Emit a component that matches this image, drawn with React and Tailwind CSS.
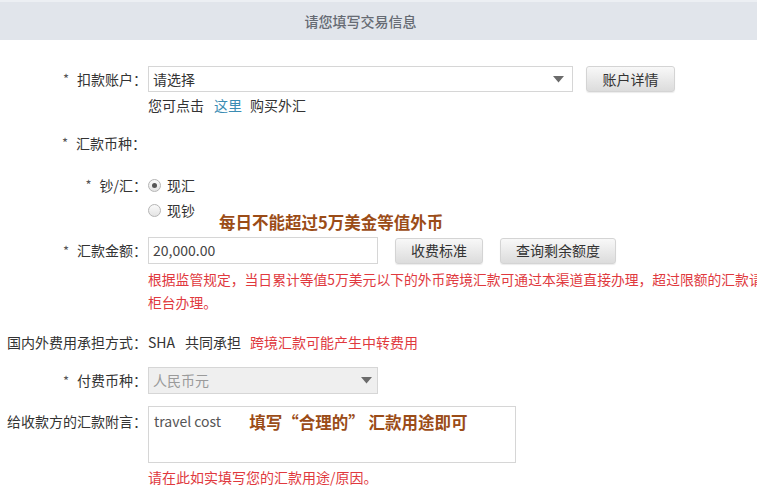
import React from 'react';

const font = { fontFamily: '"Noto Sans CJK SC", "Noto Sans", sans-serif' };

// Label column: right-aligned, ends where the fields start
function Label({ star, children }) {
  return (
    <div className="w-[148px] shrink-0 flex justify-end items-center pr-[1px] text-[14px] text-[#333] whitespace-nowrap">
      {star && <span className="mr-[8px] text-[13px] text-[#555]">*</span>}
      <span>{children}</span>
    </div>
  );
}

function Caret() {
  return (
    <svg width="11" height="7" viewBox="0 0 11 7" className="shrink-0">
      <path d="M0 0 L11 0 L5.5 6.5 Z" fill="#6b6b6b" />
    </svg>
  );
}

function Radio({ checked }) {
  return (
    <span className="w-[13px] h-[13px] rounded-full border border-[#b5b5b5] bg-gradient-to-b from-[#fafafa] to-[#e4e4e4] flex items-center justify-center shrink-0">
      {checked && <span className="w-[5px] h-[5px] rounded-full bg-[#555]" />}
    </span>
  );
}

function GrayButton({ className, children }) {
  return (
    <button
      type="button"
      className={`h-[26px] rounded-[3px] border border-[#d4d4d4] bg-gradient-to-b from-[#f8f8f8] to-[#dcdcdc] text-[14px] text-[#333] shadow-[0_1px_1px_rgba(0,0,0,0.08)] ${className}`}
    >
      {children}
    </button>
  );
}

export default function App() {
  return (
    <div className="w-[757px] h-[500px] overflow-hidden bg-white text-[#333]" style={font}>
      {/* header */}
      <div className="h-[40px] bg-[#e1e5eb] border-t-2 border-[#eceff3] flex items-center justify-center pr-[36px]">
        <span className="text-[14px] font-medium text-[#666b73]">请您填写交易信息</span>
      </div>

      {/* 扣款账户 */}
      <div className="flex items-center mt-[26px] h-[26px]">
        <Label star>扣款账户：</Label>
        <div className="w-[425px] h-[26px] border border-[#d6d6d6] flex items-center justify-between pl-[4px] pr-[8px] text-[14px]">
          <span>请选择</span>
          <Caret />
        </div>
        <GrayButton className="ml-[13px] w-[89px]">账户详情</GrayButton>
      </div>

      <div className="flex mt-[3px] h-[20px] items-center">
        <div className="w-[148px] shrink-0" />
        <span className="text-[14px]">您可点击</span>
        <span className="text-[14px] text-[#3b8cb3] ml-[10px]">这里</span>
        <span className="text-[14px] ml-[8px]">购买外汇</span>
      </div>

      {/* 汇款币种 */}
      <div className="flex mt-[18px] h-[20px] items-center">
        <div className="w-[148px] shrink-0 flex items-center text-[14px] whitespace-nowrap pl-[62px]">
          <span className="mr-[8px] text-[13px] text-[#555]">*</span>
          <span>汇款币种：</span>
        </div>
      </div>

      {/* 钞/汇 */}
      <div className="flex mt-[22px] h-[20px] items-center">
        <Label star>钞/汇：</Label>
        <Radio checked />
        <span className="ml-[6px] text-[14px]">现汇</span>
      </div>
      <div className="flex mt-[5px] h-[20px] items-center">
        <div className="w-[148px] shrink-0" />
        <Radio />
        <span className="ml-[6px] text-[14px]">现钞</span>
        <span className="relative top-[12px] ml-[24px] text-[16.5px] font-bold text-[#9b4c17] whitespace-nowrap">
          每日不能超过5万美金等值外币
        </span>
      </div>

      {/* 汇款金额 */}
      <div className="flex mt-[17px] h-[27px] items-center">
        <Label star>汇款金额：</Label>
        <div className="w-[230px] h-[27px] border border-[#d6d6d6] flex items-center pl-[4px] text-[14px] text-[#444]">
          20,000.00
        </div>
        <GrayButton className="ml-[17px] w-[88px]">收费标准</GrayButton>
        <GrayButton className="ml-[17px] w-[116px]">查询剩余额度</GrayButton>
      </div>

      <div className="flex mt-[4px]">
        <div className="w-[148px] shrink-0" />
        <div className="text-[13.8px] leading-[23px] text-[#e0393e] whitespace-nowrap">
          <div>根据监管规定，当日累计等值5万美元以下的外币跨境汇款可通过本渠道直接办理，超过限额的汇款请</div>
          <div>柜台办理。</div>
        </div>
      </div>

      {/* 费用承担 */}
      <div className="flex mt-[18px] h-[20px] items-center text-[14px]">
        <div className="w-[148px] shrink-0 pl-[7px] whitespace-nowrap">国内外费用承担方式：</div>
        <span>SHA</span>
        <span className="ml-[10px]">共同承担</span>
        <span className="ml-[9px] text-[#e0393e]">跨境汇款可能产生中转费用</span>
      </div>

      {/* 付费币种 */}
      <div className="flex mt-[15px] h-[27px] items-center">
        <Label star>付费币种：</Label>
        <div className="w-[230px] h-[27px] border border-[#d6d6d6] bg-[#efefef] flex items-center justify-between pl-[4px] pr-[5px] text-[14px] text-[#9a9a9a]">
          <span>人民币元</span>
          <Caret />
        </div>
      </div>

      {/* 附言 */}
      <div className="flex mt-[12px]">
        <div className="w-[148px] shrink-0 pl-[7px] pt-[5px] text-[14px] whitespace-nowrap">给收款方的汇款附言：</div>
        <div className="w-[368px] h-[57px] border border-[#d6d6d6] flex items-start pl-[5px] pt-[4px] text-[14px]">
          <span className="text-[#555]">travel cost</span>
          <span className="ml-[28px] -mt-[1px] text-[16.5px] font-bold text-[#9b4c17] whitespace-nowrap">
            填写“合理的” 汇款用途即可
          </span>
        </div>
      </div>

      <div className="flex mt-[4px] h-[20px] items-center">
        <div className="w-[148px] shrink-0" />
        <span className="text-[14px] text-[#e0393e]">请在此如实填写您的汇款用途/原因。</span>
      </div>
    </div>
  );
}
